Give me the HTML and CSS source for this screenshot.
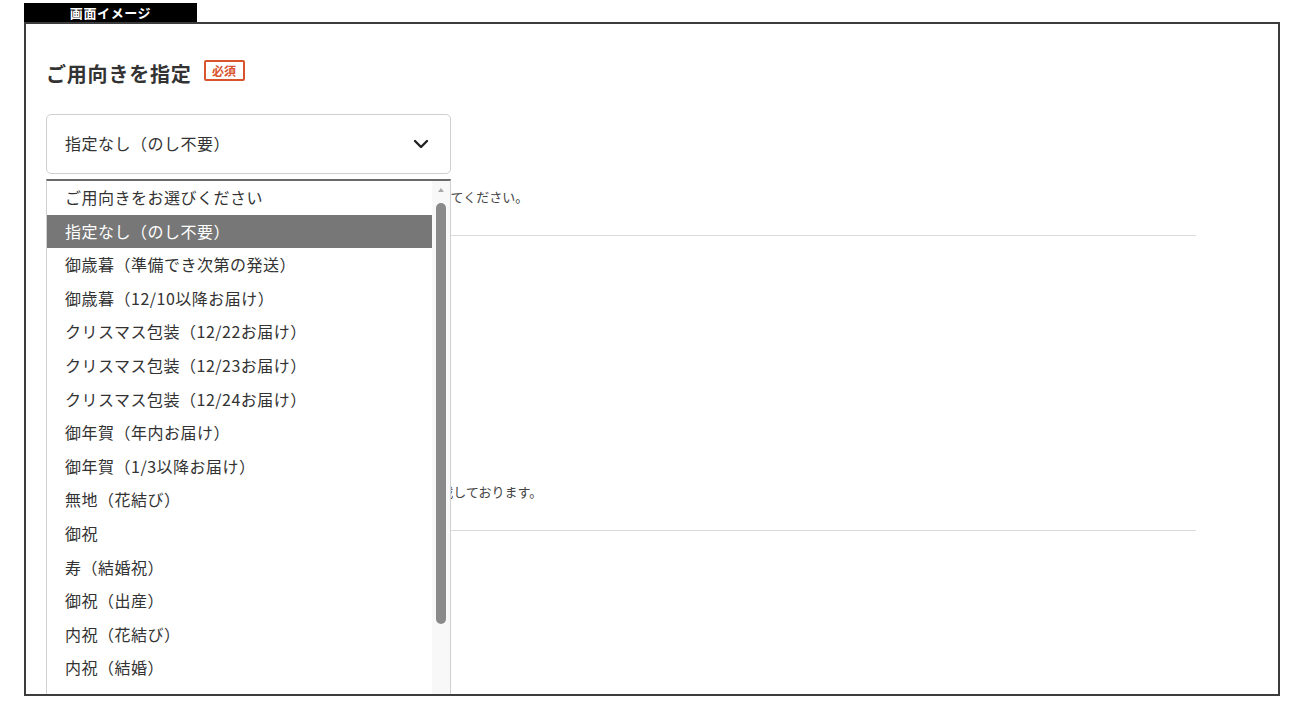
FILE: index.html
```html
<!DOCTYPE html>
<html lang="ja">
<head>
<meta charset="utf-8">
<title>画面イメージ</title>
<link rel="stylesheet" href="styles.css">
</head>
<body>
<div class="tab">画面イメージ</div>
<div class="frame">
  <div class="content">
    <section class="section">
      <h2 class="heading">ご用向きを指定<span class="badge">必須</span></h2>
      <div class="select-wrap">
        <div class="select">
          <span class="select-value">指定なし（のし不要）</span>
          <svg class="chevron" width="16" height="10" viewBox="0 0 16 10"><path d="M2 2 L8 8 L14 2" fill="none" stroke="#222" stroke-width="2.4" stroke-linecap="round" stroke-linejoin="round"/></svg>
        </div>
        <div class="dropdown">
          <ul class="options">
            <li class="option">ご用向きをお選びください</li>
            <li class="option selected">指定なし（のし不要）</li>
            <li class="option">御歳暮（準備でき次第の発送）</li>
            <li class="option">御歳暮（12/10以降お届け）</li>
            <li class="option">クリスマス包装（12/22お届け）</li>
            <li class="option">クリスマス包装（12/23お届け）</li>
            <li class="option">クリスマス包装（12/24お届け）</li>
            <li class="option">御年賀（年内お届け）</li>
            <li class="option">御年賀（1/3以降お届け）</li>
            <li class="option">無地（花結び）</li>
            <li class="option">御祝</li>
            <li class="option">寿（結婚祝）</li>
            <li class="option">御祝（出産）</li>
            <li class="option">内祝（花結び）</li>
            <li class="option">内祝（結婚）</li>
            <li class="option">内祝（出産）</li>
          </ul>
          <div class="scrollbar">
            <span class="arrow"></span>
            <span class="thumb"></span>
          </div>
        </div>
      </div>
      <p class="note note-1">※お届け先ごとに熨斗（のし）をご希望の場合は、ご用向きを選択してください。</p>
    </section>
    <section class="section">
      <h3 class="sub">のし名入れ</h3>
      <div class="field"></div>
      <div class="field"></div>
      <p class="note note-2">※名入れは最大全角十文字までとなります。詳細は別途ご案内に記載しております。</p>
    </section>
    <section class="section section-last">
      <h3 class="sub">包装</h3>
      <div class="field"></div>
    </section>
  </div>
</div>
</body>
</html>
```

FILE: styles.css
```css
* { box-sizing: border-box; }
body {
  margin: 0;
  background: #fff;
  font-family: "Noto Sans CJK JP", "Noto Sans", sans-serif;
  color: #333;
}
.tab {
  margin: 3px 0 0 24px;
  width: 173px;
  height: 19px;
  background: #000;
  color: #fff;
  font-size: 13px;
  font-weight: 700;
  line-height: 19px;
  text-align: center;
  letter-spacing: 0.6px;
}
.frame {
  margin-left: 24px;
  width: 1256px;
  height: 674px;
  border: 2px solid #3c3c3c;
  overflow: hidden;
}
.content {
  width: 1150px;
  margin-left: 20px;
  padding-top: 35px;
}
.section {
  border-bottom: 1px solid #dcdcdc;
  padding-bottom: 28px;
}
.section-last {
  border-bottom: none;
  height: 300px;
}
.heading {
  margin: 0;
  font-size: 20px;
  line-height: 30px;
  font-weight: 700;
  letter-spacing: 0.8px;
  color: #333;
  display: flex;
  align-items: center;
}
.badge {
  display: inline-block;
  margin-left: 12px;
  margin-top: -7px;
  width: 41px;
  height: 21px;
  border: 2px solid #d9532c;
  border-radius: 2px;
  color: #d9532c;
  font-size: 12px;
  font-weight: 700;
  line-height: 17px;
  text-align: center;
  letter-spacing: 0;
}
.select-wrap {
  position: relative;
  width: 405px;
  margin-top: 25px;
}
.select {
  height: 60px;
  border: 1px solid #cfcfcf;
  border-radius: 5px;
  display: flex;
  align-items: center;
  justify-content: space-between;
  padding: 0 21px 0 18px;
}
.select-value {
  font-size: 16px;
  letter-spacing: 0.5px;
  color: #333;
  margin-top: -3px;
}
.chevron {
  margin-top: -1px;
}
.dropdown {
  position: absolute;
  top: 65px;
  left: 0;
  width: 405px;
  display: flex;
  background: #fff;
  border-top: 2px solid #6a6a6a;
  border-left: 1px solid #d0d0d0;
  border-right: 1px solid #d0d0d0;
  z-index: 5;
}
.options {
  list-style: none;
  margin: 0;
  padding: 0;
  flex: 1;
}
.option {
  height: 33.6px;
  line-height: 32px;
  padding-left: 18px;
  font-size: 16px;
  letter-spacing: 0.5px;
  color: #333;
  white-space: nowrap;
}
.option.selected {
  background: #777;
  color: #fff;
}
.scrollbar {
  width: 18px;
  background: #f8f8f8;
  display: flex;
  flex-direction: column;
  align-items: center;
}
.arrow {
  margin-top: 7px;
  width: 0;
  height: 0;
  border-left: 3.5px solid transparent;
  border-right: 3.5px solid transparent;
  border-bottom: 4px solid #a8a8a8;
}
.thumb {
  margin-top: 11px;
  width: 10px;
  height: 421px;
  border-radius: 5px;
  background: #8a8a8a;
}
.note {
  margin: 13px 0 0;
  font-size: 13px;
  line-height: 20px;
  color: #444;
  white-space: nowrap;
}
.note-1 {
  padding-left: 2px;
}
.sub {
  margin: 30px 0 0;
  font-size: 16px;
  line-height: 24px;
  font-weight: 700;
}
.field {
  width: 404px;
  height: 48px;
  margin-top: 12px;
  border: 1px solid #cfcfcf;
  border-radius: 5px;
}
.note-2 {
  margin-top: 72px;
  padding-left: 6px;
}
```
